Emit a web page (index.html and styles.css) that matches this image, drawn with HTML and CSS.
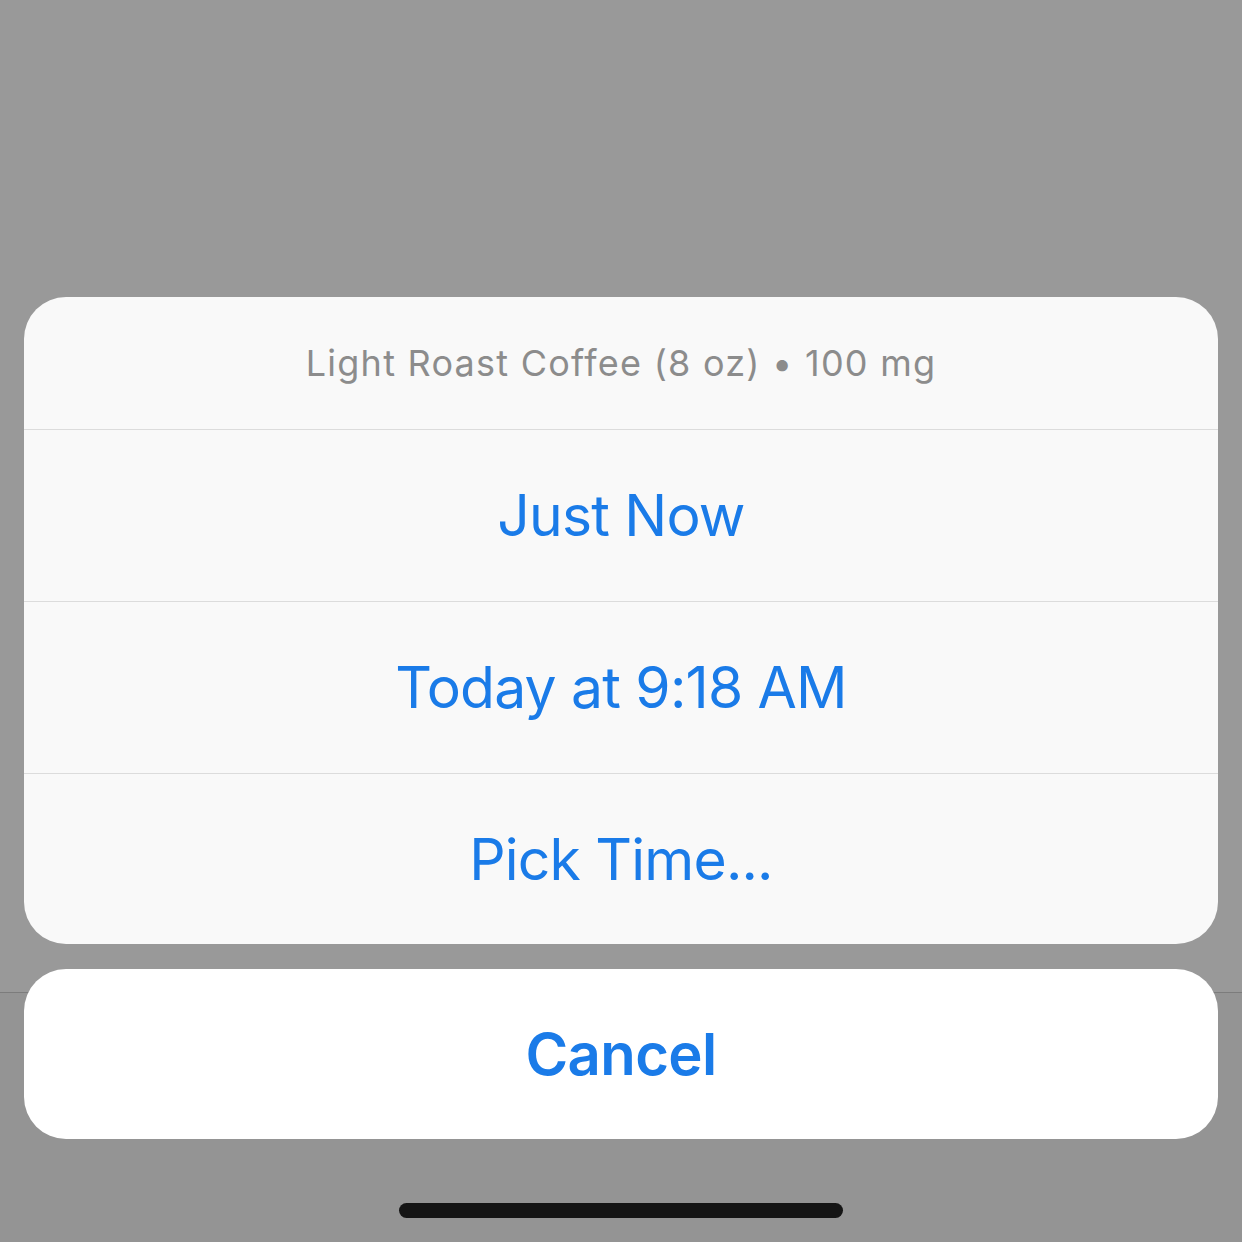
FILE: index.html
```html
<!DOCTYPE html>
<html lang="en">
<head>
<meta charset="utf-8">
<title>Action Sheet</title>
<link rel="stylesheet" href="styles.css">
</head>
<body>
<div class="screen">
  <div class="backdrop-bar"></div>
  <div class="sheet">
    <div class="sheet-title">Light Roast Coffee (8 oz) • 100 mg</div>
    <div class="sheet-action">Just Now</div>
    <div class="sheet-action">Today at 9:18 AM</div>
    <div class="sheet-action">Pick Time...</div>
  </div>
  <div class="cancel">Cancel</div>
  <div class="home-area">
    <div class="home-indicator"></div>
  </div>
</div>
</body>
</html>
```

FILE: styles.css
```css
html, body {
  margin: 0;
  padding: 0;
}
body {
  background: #999999;
  font-family: Inter, "Noto Sans", "Liberation Sans", sans-serif;
}
.screen {
  position: relative;
  width: 1242px;
  height: 1242px;
  box-sizing: border-box;
  padding: 0 24px;
  display: flex;
  flex-direction: column;
  justify-content: flex-end;
  overflow: hidden;
}
.backdrop-bar {
  position: absolute;
  left: 0;
  right: 0;
  top: 992px;
  bottom: 0;
  background: #949494;
  border-top: 1px solid #7c7c7c;
}
.sheet {
  position: relative;
  background: #f9f9f9;
  border-radius: 42px;
  overflow: hidden;
  display: flex;
  flex-direction: column;
}
.sheet-title {
  height: 132px;
  display: flex;
  align-items: center;
  justify-content: center;
  font-size: 36px;
  color: #8c8c8c;
  letter-spacing: 1.25px;
  border-bottom: 1px solid #dcdcdc;
}
.sheet-action {
  height: 171px;
  display: flex;
  align-items: center;
  justify-content: center;
  font-size: 57px;
  letter-spacing: -0.8px;
  color: #1a7be8;
  border-bottom: 1px solid #dcdcdc;
}
.sheet-action:last-child {
  border-bottom: none;
  height: 170px;
}
.cancel {
  position: relative;
  margin-top: 25px;
  height: 170px;
  background: #ffffff;
  border-radius: 42px;
  display: flex;
  align-items: center;
  justify-content: center;
  font-size: 58px;
  letter-spacing: -0.6px;
  font-weight: 600;
  color: #1a7be8;
}
.home-area {
  position: relative;
  height: 103px;
  display: flex;
  justify-content: center;
  align-items: flex-end;
  padding-bottom: 24px;
  box-sizing: border-box;
}
.home-indicator {
  width: 444px;
  height: 15px;
  border-radius: 8px;
  background: #151515;
}
```
